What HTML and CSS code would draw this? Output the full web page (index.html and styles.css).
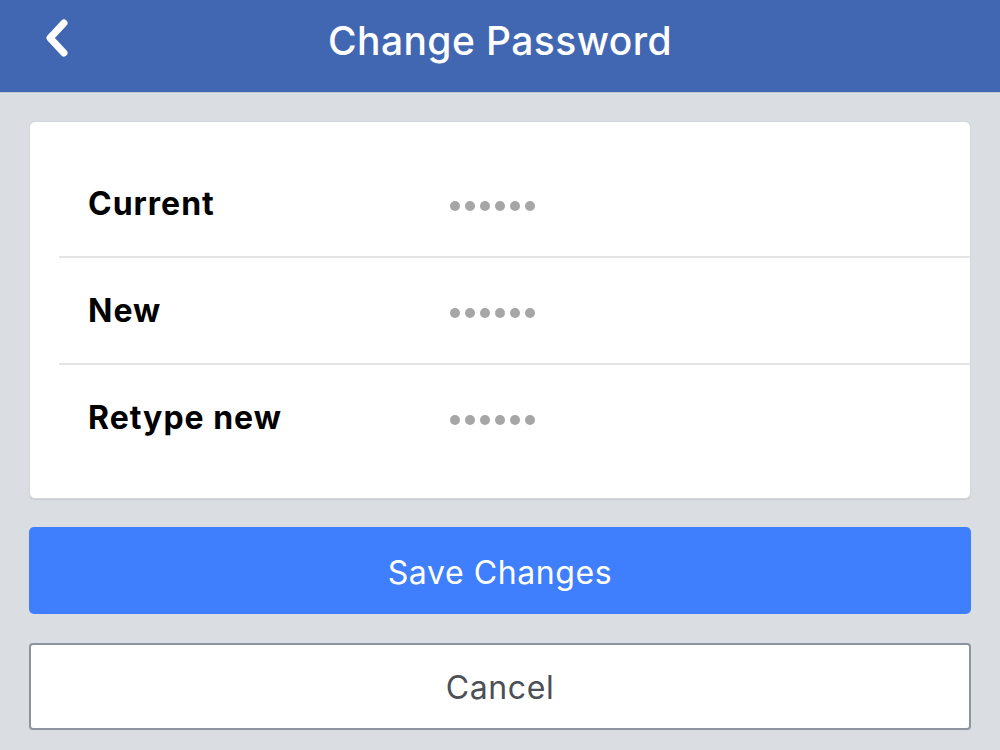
FILE: index.html
```html
<!DOCTYPE html>
<html lang="en">
<head>
    <meta charset="UTF-8">
    <meta name="viewport" content="width=device-width, initial-scale=1.0">
    <title>Change Password</title>
    <link rel="stylesheet" href="styles.css">
</head>
<body>
    <div class="header">
        <button class="back-btn">
            <svg xmlns="http://www.w3.org/2000/svg" width="30" height="44" viewBox="0 0 30 44" fill="none" stroke="currentColor" stroke-width="7" stroke-linecap="round" stroke-linejoin="round">
                <polyline points="21,6 7,21 21,36"></polyline>
            </svg>
        </button>
        <h1>Change Password</h1>
    </div>

    <div class="content">
        <div class="card">
            <div class="row">
                <span class="label">Current</span>
                <span class="dots"><i></i><i></i><i></i><i></i><i></i><i></i></span>
            </div>
            <div class="row">
                <span class="label">New</span>
                <span class="dots"><i></i><i></i><i></i><i></i><i></i><i></i></span>
            </div>
            <div class="row">
                <span class="label">Retype new</span>
                <span class="dots"><i></i><i></i><i></i><i></i><i></i><i></i></span>
            </div>
        </div>
        <button class="save-btn">Save Changes</button>
        <button class="cancel-btn">Cancel</button>
    </div>
</body>
</html>
```

FILE: styles.css
```css
body {
    font-family: Inter, "Noto Sans", sans-serif;
    background-color: #dadde1;
    margin: 0;
}
.header {
    height: 92px;
    background-color: #4267b2;
    border-bottom: 1px solid #c4c8cf;
    display: flex;
    align-items: center;
    justify-content: center;
    position: relative;
}
.back-btn {
    position: absolute;
    left: 43px;
    top: 17px;
    background: none;
    border: none;
    padding: 0;
    color: white;
}
.back-btn svg {
    display: block;
}
h1 {
    margin: 0 0 12px 0;
    color: white;
    font-size: 39px;
    font-weight: 500;
    letter-spacing: 0.4px;
}
.content {
    padding: 28px 29px;
    display: flex;
    flex-direction: column;
}
.card {
    background-color: white;
    border-radius: 6px;
    border: 1px solid #d3d6da;
    box-shadow: 0 1px 1px rgba(0, 0, 0, 0.08);
    padding: 29px 0 28px 29px;
}
.row {
    height: 105px;
    display: flex;
    align-items: center;
}
.row + .row {
    border-top: 2px solid #e4e5e7;
}
.label {
    width: 362px;
    padding-left: 29px;
    font-size: 32px;
    font-weight: 700;
    letter-spacing: 1px;
    color: #000;
}
.dots {
    display: flex;
    gap: 5px;
    padding-top: 4px;
}
.dots i {
    width: 10px;
    height: 10px;
    border-radius: 50%;
    background-color: #a6a6a6;
}
.save-btn {
    margin-top: 28px;
    height: 87px;
    background-color: #3f7ffe;
    color: white;
    border: none;
    border-radius: 5px;
    font-family: inherit;
    font-size: 32px;
    letter-spacing: 0.6px;
    padding: 4px 0 0 0;
}
.cancel-btn {
    margin-top: 29px;
    height: 87px;
    background-color: white;
    color: #4b4f56;
    border: 2px solid #8d949e;
    border-radius: 4px;
    font-family: inherit;
    font-size: 32px;
    letter-spacing: 0.6px;
    padding: 2px 0 0 0;
}
```
